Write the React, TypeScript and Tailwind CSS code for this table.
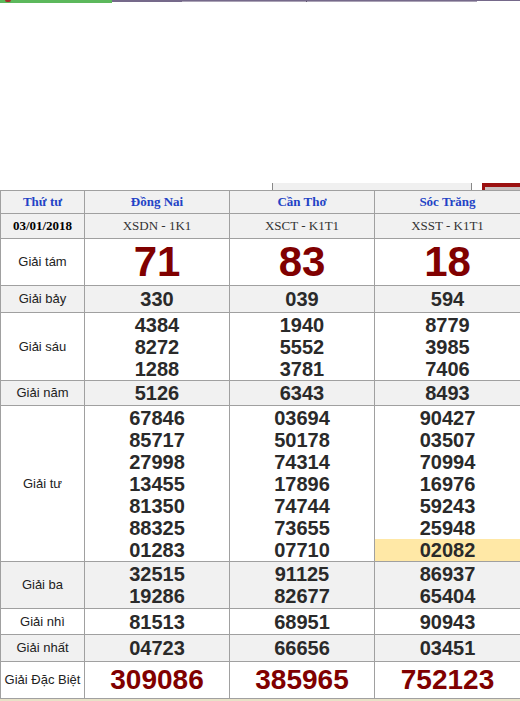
import React from 'react';

type Row = {
  label: string;
  gray: boolean;
  h: number;
  nums: string[][];
  kind?: 'big' | 'special';
};

const ROWS: Row[] = [
  { label: 'Giải tám', gray: false, h: 47, nums: [['71'], ['83'], ['18']], kind: 'big' },
  { label: 'Giải bảy', gray: true, h: 27, nums: [['330'], ['039'], ['594']] },
  {
    label: 'Giải sáu',
    gray: false,
    h: 68,
    nums: [
      ['4384', '8272', '1288'],
      ['1940', '5552', '3781'],
      ['8779', '3985', '7406'],
    ],
  },
  { label: 'Giải năm', gray: true, h: 25, nums: [['5126'], ['6343'], ['8493']] },
  {
    label: 'Giải tư',
    gray: false,
    h: 156,
    nums: [
      ['67846', '85717', '27998', '13455', '81350', '88325', '01283'],
      ['03694', '50178', '74314', '17896', '74744', '73655', '07710'],
      ['90427', '03507', '70994', '16976', '59243', '25948', '02082'],
    ],
  },
  {
    label: 'Giải ba',
    gray: true,
    h: 47,
    nums: [
      ['32515', '19286'],
      ['91125', '82677'],
      ['86937', '65404'],
    ],
  },
  { label: 'Giải nhì', gray: false, h: 26, nums: [['81513'], ['68951'], ['90943']] },
  { label: 'Giải nhất', gray: true, h: 27, nums: [['04723'], ['66656'], ['03451']] },
  {
    label: 'Giải Đặc Biệt',
    gray: false,
    h: 37,
    nums: [['309086'], ['385965'], ['752123']],
    kind: 'special',
  },
];

const serif = { fontFamily: '"Liberation Serif", "Times New Roman", serif' };

export default function App() {
  return (
    <div className="w-[520px] h-[701px] bg-white overflow-hidden relative" style={{ fontFamily: '"Liberation Sans", Arial, sans-serif' }}>
      {/* top strip */}
      <div className="flex h-[3px]">
        <div className="w-[112px] bg-[#5cb85c] relative">
          <div className="absolute left-[5px] top-0 w-[6px] h-[2px] bg-[#a52a2a] rounded-b-full" />
        </div>
        <div className="flex-1 flex flex-col">
          <div className="h-[1px] bg-[#75698a]" />
          <div className="h-[1px] flex">
            <div className="w-[70px] bg-[#75698a]" />
            <div className="w-[124px] bg-[#aaa2b5]" />
            <div className="w-[1px] bg-[#5d546b]" />
            <div className="w-[170px] bg-[#aaa2b5]" />
            <div className="flex-1" />
          </div>
        </div>
      </div>

      {/* clipped strip above the table */}
      <div className="mt-[180px] flex h-[7px]">
        <div className="w-[272px]" />
        <div className="w-[200px] bg-[#f0f0f0] border-x border-[#888]" />
        <div className="w-[10px]" />
        <div className="flex-1 bg-[#9b1010] flex flex-col justify-end">
          <div className="h-[3px] ml-[3px] bg-[#c9c0c0]" />
        </div>
      </div>

      <table className="table-fixed border-collapse w-[520px] text-[13px]">
        <colgroup>
          <col className="w-[84px]" />
          <col className="w-[145px]" />
          <col className="w-[145px]" />
          <col className="w-[146px]" />
        </colgroup>
        <tbody>
          <tr className="h-[23px] bg-[#f1f1f1]">
            {['Thứ tư', 'Đồng Nai', 'Cần Thơ', 'Sóc Trăng'].map((t) => (
              <td
                key={t}
                className="border border-[#a0a0a0] text-center font-bold text-[#2343c6] p-0"
                style={serif}
              >
                {t}
              </td>
            ))}
          </tr>
          <tr className="h-[25px] bg-[#f1f1f1]">
            <td className="border border-[#a0a0a0] text-center font-bold text-black p-0" style={serif}>
              03/01/2018
            </td>
            {['XSDN - 1K1', 'XSCT - K1T1', 'XSST - K1T1'].map((t) => (
              <td key={t} className="border border-[#a0a0a0] text-center text-[#333] p-0" style={serif}>
                {t}
              </td>
            ))}
          </tr>
          {ROWS.map((row) => (
            <tr key={row.label} className={row.gray ? 'bg-[#f1f1f1]' : 'bg-white'} style={{ height: row.h }}>
              <td className="border border-[#a0a0a0] text-center text-[#222] p-0 whitespace-nowrap">
                {row.label}
              </td>
              {row.nums.map((col, ci) => (
                <td key={ci} className="border border-[#a0a0a0] text-center p-0 align-middle">
                  {col.map((n, ni) => {
                    const hl = row.label === 'Giải tư' && ci === 2 && ni === col.length - 1;
                    if (row.kind === 'big') {
                      return (
                        <div key={ni} className="text-[42px] leading-[46px] font-bold text-[#800000]">
                          {n}
                        </div>
                      );
                    }
                    if (row.kind === 'special') {
                      return (
                        <div key={ni} className="text-[28px] leading-[36px] font-bold text-[#800000]">
                          {n}
                        </div>
                      );
                    }
                    return (
                      <div
                        key={ni}
                        className={`text-[20px] leading-[22px] font-bold text-[#2a2a2a] ${hl ? 'bg-[#ffe8a6]' : ''}`}
                      >
                        {n}
                      </div>
                    );
                  })}
                </td>
              ))}
            </tr>
          ))}
        </tbody>
      </table>
      <div className="h-[2px] bg-[#e8e2c8]" />
    </div>
  );
}
